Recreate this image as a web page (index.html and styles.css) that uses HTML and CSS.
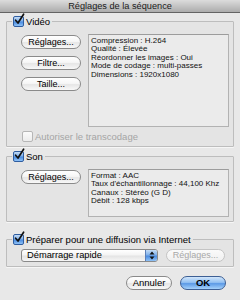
FILE: index.html
```html
<!DOCTYPE html>
<html lang="fr">
<head>
<meta charset="utf-8">
<title>Réglages de la séquence</title>
<link rel="stylesheet" href="styles.css">
</head>
<body>
<div class="window">
  <div class="titlebar">Réglages de la séquence</div>
  <div class="panel">
    <fieldset class="group group-video">
      <legend class="legend">
        <span class="check on"><svg width="12" height="13" viewBox="0 0 12 13"><path d="M2.6 7.2 L5 10 L10.6 1.2" fill="none" stroke="#111" stroke-width="1.7" stroke-linecap="round" stroke-linejoin="round"/></svg></span>
        <span class="legend-text">Vidéo</span>
      </legend>
      <div class="group-row">
        <div class="btn-col">
          <button class="btn">Réglages...</button>
          <button class="btn">Filtre...</button>
          <button class="btn">Taille...</button>
        </div>
        <div class="info info-video">
          <div>Compression : H.264</div>
          <div>Qualité : Élevée</div>
          <div>Réordonner les images : Oui</div>
          <div>Mode de codage : multi-passes</div>
          <div>Dimensions : 1920x1080</div>
        </div>
      </div>
      <div class="opt disabled">
        <span class="check off"></span>
        <span>Autoriser le transcodage</span>
      </div>
    </fieldset>

    <fieldset class="group group-son">
      <legend class="legend">
        <span class="check on"><svg width="12" height="13" viewBox="0 0 12 13"><path d="M2.6 7.2 L5 10 L10.6 1.2" fill="none" stroke="#111" stroke-width="1.7" stroke-linecap="round" stroke-linejoin="round"/></svg></span>
        <span class="legend-text">Son</span>
      </legend>
      <div class="group-row">
        <div class="btn-col">
          <button class="btn">Réglages...</button>
        </div>
        <div class="info info-son">
          <div>Format : AAC</div>
          <div>Taux d'échantillonnage : 44,100 Khz</div>
          <div>Canaux : Stéréo (G D)</div>
          <div>Débit : 128 kbps</div>
        </div>
      </div>
    </fieldset>

    <fieldset class="group group-web">
      <legend class="legend">
        <span class="check on"><svg width="12" height="13" viewBox="0 0 12 13"><path d="M2.6 7.2 L5 10 L10.6 1.2" fill="none" stroke="#111" stroke-width="1.7" stroke-linecap="round" stroke-linejoin="round"/></svg></span>
        <span class="legend-text">Préparer pour une diffusion via Internet</span>
      </legend>
      <div class="web-row">
        <div class="popup">
          <span class="popup-label">Démarrage rapide</span>
          <span class="popup-arrows"><svg width="6" height="9" viewBox="0 0 6 9"><path d="M3 0.5 L5.5 3.5 L0.5 3.5 Z M3 8.5 L5.5 5.5 L0.5 5.5 Z" fill="#111"/></svg></span>
        </div>
        <button class="btn btn-disabled">Réglages...</button>
      </div>
    </fieldset>

    <div class="actions">
      <button class="btn btn-action">Annuler</button>
      <button class="btn btn-action btn-default">OK</button>
    </div>
  </div>
</div>
</body>
</html>
```

FILE: styles.css
```css
html, body {
  margin: 0;
  padding: 0;
}

body {
  width: 240px;
  height: 300px;
  overflow: hidden;
  background: #e8e8e8;
  font-family: "Liberation Sans", Arial, sans-serif;
  color: #000;
}

.window {
  width: 240px;
  height: 300px;
  display: flex;
  flex-direction: column;
}

.titlebar {
  height: 12px;
  line-height: 12px;
  border-bottom: 1px solid #646464;
  background: linear-gradient(#dcdcdc, #c4c4c4 50%, #acacac);
  text-align: center;
  font-size: 9.2px;
  color: #1a1a1a;
}

.panel {
  padding: 3px 6px 0 6px;
  display: flex;
  flex-direction: column;
}

.group {
  margin: 0;
  padding: 0;
  min-width: 0;
  border: 1px solid #bdbdbd;
  border-radius: 1px;
  background: #e4e4e4;
  box-shadow: 0 1px 0 #f6f6f6;
}

.legend {
  margin-left: 5px;
  padding: 0 1px;
  height: 11px;
  line-height: 11px;
  display: flex;
  align-items: center;
  font-size: 9.5px;
  color: #000;
}

.legend-text {
  margin-left: 2px;
  padding-right: 1px;
}

.check {
  position: relative;
  width: 11px;
  height: 11px;
  box-sizing: border-box;
  border-radius: 2px;
  flex: none;
}

.check.on {
  border: 1px solid #2f5da0;
  background: linear-gradient(#c4dcf6, #7fb0ea 45%, #4a8be0 55%, #8fc2f6);
}

.check.on svg {
  position: absolute;
  left: -1px;
  top: -4px;
}

.check.off {
  border: 1px solid #b6b6b6;
  background: linear-gradient(#fbfbfb, #ececec);
}

.group-row {
  display: flex;
  padding: 7px 4px 0 14px;
  gap: 7px;
}

.btn-col {
  display: flex;
  flex-direction: column;
  gap: 7px;
  padding-top: 1px;
  width: 60px;
  flex: none;
}

.btn {
  height: 14px;
  box-sizing: border-box;
  padding: 0;
  margin: 0;
  border: 1px solid #8a8a8a;
  border-radius: 7px;
  background: linear-gradient(#ffffff, #f6f6f6 45%, #e6e6e6 55%, #f8f8f8);
  font-family: "Liberation Sans", Arial, sans-serif;
  font-size: 9px;
  line-height: 12px;
  color: #000;
  text-align: center;
}

.btn-col .btn {
  width: 60px;
}

.info {
  flex: 1;
  box-sizing: border-box;
  border: 1px solid #b2b2b2;
  border-top-color: #9c9c9c;
  background: #ebebeb;
  padding: 1.5px 2px 0 2px;
  font-size: 8px;
  line-height: 8.6px;
  color: #111;
  white-space: nowrap;
}

.info-video {
  height: 93px;
}

.info-son {
  height: 48px;
}

.opt {
  display: flex;
  align-items: center;
  gap: 2px;
  padding: 4px 0 4px 15px;
  font-size: 9.5px;
  line-height: 11px;
}

.opt.disabled {
  color: #a4a4a4;
}

.group-son {
  margin-top: 4px;
  padding-bottom: 4px;
}

.group-web {
  margin-top: 12px;
}

.web-row {
  display: flex;
  align-items: center;
  gap: 8px;
  padding: 4px 0 4px 14px;
}

.popup {
  width: 137px;
  height: 13px;
  box-sizing: border-box;
  border: 1px solid #8a8a8a;
  border-radius: 3px;
  background: linear-gradient(#ffffff, #f4f4f4 45%, #e4e4e4 55%, #f6f6f6);
  display: flex;
  align-items: stretch;
  overflow: hidden;
}

.popup-label {
  flex: 1;
  padding-left: 5px;
  font-size: 9.3px;
  line-height: 11px;
  color: #000;
}

.popup-arrows {
  width: 11px;
  border-left: 1px solid #5b7fb8;
  background: linear-gradient(#c4dcf6, #7fb0ea 45%, #4a8be0 55%, #8fc2f6);
  display: flex;
  align-items: center;
  justify-content: center;
}

.btn-disabled {
  width: 59px;
  height: 13px;
  line-height: 11px;
  border-color: #c4c4c4;
  color: #a8a8a8;
  background: linear-gradient(#fafafa, #f0f0f0);
}

.actions {
  display: flex;
  justify-content: flex-end;
  gap: 8px;
  padding: 9px 8px 0 0;
}

.btn-action {
  width: 46px;
  font-size: 9.5px;
}

.btn-default {
  border-color: #3d5f94;
  background: linear-gradient(#d2e6fb, #93c1f2 45%, #5c9ae6 55%, #a6d2fb);
  font-weight: bold;
}
```
